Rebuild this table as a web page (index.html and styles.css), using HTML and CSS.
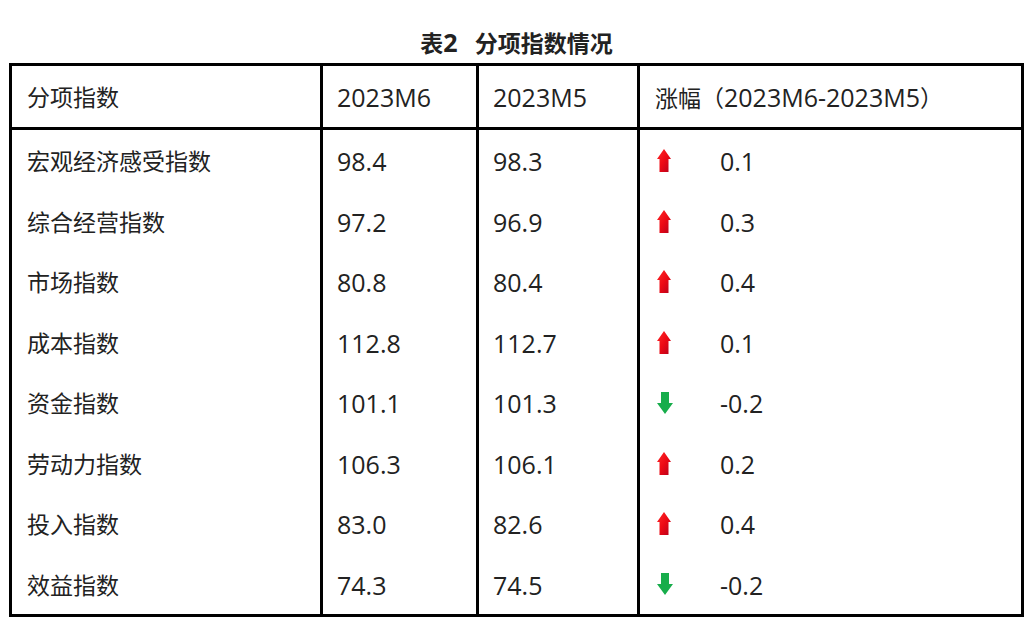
FILE: index.html
```html
<!DOCTYPE html>
<html lang="zh-CN">
<head>
<meta charset="utf-8">
<title>表2 分项指数情况</title>
<link rel="stylesheet" href="styles.css">
</head>
<body>
<div class="page">
  <div class="title">表<span class="lat">2</span><span class="gap"></span>分项指数情况</div>
  <table class="grid">
    <colgroup>
      <col class="c1"><col class="c2"><col class="c3"><col class="c4">
    </colgroup>
    <thead>
      <tr>
        <th class="name">分项指数</th>
        <th class="num">2023M6</th>
        <th class="num">2023M5</th>
        <th class="chg">涨幅（<span class="lat">2023M6-2023M5</span>）</th>
      </tr>
    </thead>
    <tbody>
      <tr><td class="name">宏观经济感受指数</td><td class="num">98.4</td><td class="num">98.3</td><td class="chg"><div class="delta"><span class="arrow"><svg class="up" viewBox="0 0 14 23"><use href="#up"/></svg></span><span class="val">0.1</span></div></td></tr>
      <tr><td class="name">综合经营指数</td><td class="num">97.2</td><td class="num">96.9</td><td class="chg"><div class="delta"><span class="arrow"><svg class="up" viewBox="0 0 14 23"><use href="#up"/></svg></span><span class="val">0.3</span></div></td></tr>
      <tr><td class="name">市场指数</td><td class="num">80.8</td><td class="num">80.4</td><td class="chg"><div class="delta"><span class="arrow"><svg class="up" viewBox="0 0 14 23"><use href="#up"/></svg></span><span class="val">0.4</span></div></td></tr>
      <tr><td class="name">成本指数</td><td class="num">112.8</td><td class="num">112.7</td><td class="chg"><div class="delta"><span class="arrow"><svg class="up" viewBox="0 0 14 23"><use href="#up"/></svg></span><span class="val">0.1</span></div></td></tr>
      <tr><td class="name">资金指数</td><td class="num">101.1</td><td class="num">101.3</td><td class="chg"><div class="delta"><span class="arrow"><svg class="down" viewBox="0 0 16 22"><use href="#down"/></svg></span><span class="val">-0.2</span></div></td></tr>
      <tr><td class="name">劳动力指数</td><td class="num">106.3</td><td class="num">106.1</td><td class="chg"><div class="delta"><span class="arrow"><svg class="up" viewBox="0 0 14 23"><use href="#up"/></svg></span><span class="val">0.2</span></div></td></tr>
      <tr><td class="name">投入指数</td><td class="num">83.0</td><td class="num">82.6</td><td class="chg"><div class="delta"><span class="arrow"><svg class="up" viewBox="0 0 14 23"><use href="#up"/></svg></span><span class="val">0.4</span></div></td></tr>
      <tr><td class="name">效益指数</td><td class="num">74.3</td><td class="num">74.5</td><td class="chg"><div class="delta"><span class="arrow"><svg class="down" viewBox="0 0 16 22"><use href="#down"/></svg></span><span class="val">-0.2</span></div></td></tr>
    </tbody>
  </table>
</div>
<svg class="defs" width="0" height="0" aria-hidden="true">
  <defs>
    <linearGradient id="redg" x1="0" y1="0" x2="1" y2="1">
      <stop offset="0" stop-color="#ff2a2a"/>
      <stop offset="0.5" stop-color="#ee0a14"/>
      <stop offset="1" stop-color="#b5001c"/>
    </linearGradient>
    <polygon id="up" points="7,0 14,10 11.5,10 11.5,23 2.5,23 2.5,10 0,10" fill="url(#redg)"/>
    <polygon id="down" points="4,0 12,0 12,11 16,11 8,22 0,11 4,11" fill="#17ad4b"/>
  </defs>
</svg>
</body>
</html>
```

FILE: styles.css
```css
html, body {
  margin: 0;
  padding: 0;
  background: #ffffff;
}

.page {
  padding: 0 12px 0 9px;
  width: 1015px;
  font-family: "Open Sans", "Noto Sans CJK SC", sans-serif;
  color: #222222;
}

.title {
  padding-top: 27px;
  height: 30px;
  line-height: 30px;
  margin-bottom: 6px;
  text-align: center;
  font-weight: bold;
  font-size: 23px;
  color: #222222;
}

.title .gap {
  display: inline-block;
  width: 17px;
}

.grid {
  table-layout: fixed;
  width: 1015px;
  border-collapse: separate;
  border-spacing: 0;
  border-top: 3px solid #000;
  border-left: 3px solid #000;
  border-bottom: 3px solid #000;
  font-size: 23px;
  line-height: 30px;
}

.c1 { width: 311px; }
.c2 { width: 156px; }
.c3 { width: 161px; }
.c4 { width: 384px; }

.grid th,
.grid td {
  border-right: 3px solid #000;
  padding: 0 0 0 15px;
  text-align: left;
  font-weight: normal;
  white-space: nowrap;
  vertical-align: middle;
}

.grid th {
  height: 60px;
  border-bottom: 3px solid #000;
  padding-top: 1px;
}

.grid td {
  height: 59px;
  padding-top: 1.5px;
}

.grid .num {
  padding-left: 14px;
  font-size: 25px;
}

.lat {
  font-size: 25px;
}

.delta {
  display: flex;
  align-items: center;
}

.arrow {
  width: 16px;
  margin-left: 2px;
  display: flex;
  align-items: center;
  margin-top: -1px;
}

.arrow .up {
  width: 14px;
  height: 23px;
  display: block;
}

.arrow .down {
  width: 16px;
  height: 22px;
  display: block;
}

.val {
  margin-left: 47px;
  font-size: 25px;
}

.defs {
  position: absolute;
  width: 0;
  height: 0;
}
```
